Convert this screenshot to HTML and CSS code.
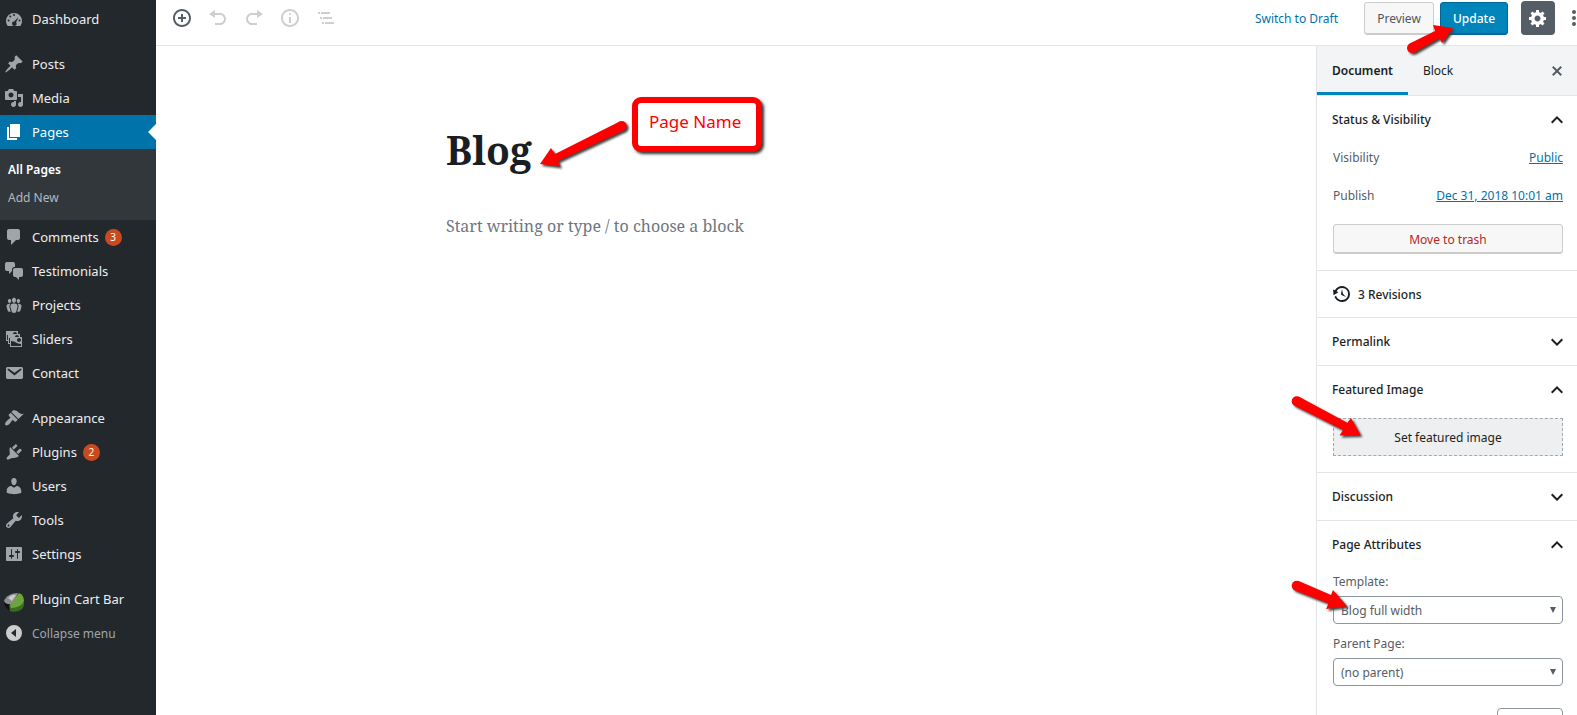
FILE: index.html
```html
<!DOCTYPE html>
<html lang="en">

<head>
    <meta charset="UTF-8">
    <meta name="viewport" content="width=device-width, initial-scale=1">
    <title>Edit Page</title>
    <link rel="stylesheet" href="styles.css">
</head>

<body>
    <nav class="admin-menu">
        <ul class="menu-group">
            <li><a class="menu-item" href="#"><svg class="icon" viewBox="0 0 20 20"><path fill-rule="evenodd" d="M3.8 17h12.4c1.1-1.4 1.8-3.100 1.800-5a8 8 0 0 0-16 0c0 1.900.7 3.600 1.800 5zM10 5a1 1 0 1 1 0 2 1 1 0 0 1 0-2zM6.300 6.500a1 1 0 1 1 0 2 1 1 0 0 1 0-2zM14.500 8l-2.400 5.500a2.200 2.200 0 1 1-2-1zM4.600 10.500a1 1 0 1 1 0 2 1 1 0 0 1 0-2zM15.500 10.500a1 1 0 1 1 0 2 1 1 0 0 1 0-2z"/></svg>Dashboard</a></li>
        </ul>
        <ul class="menu-group">
            <li><a class="menu-item" href="#"><svg class="icon" viewBox="0 0 20 20"><path d="M10.440 3.020l1.820-1.820 6.360 6.350-1.830 1.820c-1.050-.68-2.480-.57-3.410.36l-.75.75c-.92.93-1.040 2.350-.35 3.410l-1.830 1.820-2.410-2.410-2.800 2.790c-.42.42-3.380 2.710-3.800 2.290s1.860-3.390 2.280-3.810l2.790-2.790L4.100 9.360l1.830-1.820c1.050.69 2.480.57 3.400-.36l.75-.75c.93-.92 1.050-2.350.36-3.410z"/></svg>Posts</a></li>
            <li><a class="menu-item" href="#"><svg class="icon" viewBox="0 0 20 20"><path d="M13 11V4c0-.55-.45-1-1-1h-1.670L9 1H5L3.670 3H2c-.55 0-1 .45-1 1v7c0 .55.45 1 1 1h10c.55 0 1-.45 1-1zM7 4.500c1.380 0 2.500 1.120 2.500 2.500S8.380 9.500 7 9.500 4.500 8.380 4.500 7 5.620 4.500 7 4.500zM14 6h5v10.500c0 1.380-1.120 2.500-2.500 2.500S14 17.880 14 16.500s1.120-2.500 2.500-2.500c.17 0 .34.02.5.05V9h-3V6zm-4 8.050V13h2v3.500c0 1.380-1.120 2.500-2.500 2.500S7 17.880 7 16.500 8.120 14 9.500 14c.17 0 .34.02.5.05z"/></svg>Media</a></li>
            <li>
                <a class="menu-item current" href="#"><svg class="icon" viewBox="0 0 20 20"><path d="M6 15V2h10v13H6zm-1 1h8v2H3V5h2v11z"/></svg>Pages</a>
                <ul class="submenu">
                    <li><a class="current" href="#">All Pages</a></li>
                    <li><a href="#">Add New</a></li>
                </ul>
            </li>
            <li><a class="menu-item" href="#"><svg class="icon" viewBox="0 0 20 20"><path d="M5 2h9c1.100 0 2 .9 2 2v7c0 1.100-.9 2-2 2h-2l-5 5v-5H5c-1.100 0-2-.9-2-2V4c0-1.100.9-2 2-2z"/></svg>Comments <span class="count">3</span></a></li>
            <li><a class="menu-item" href="#"><svg class="icon" viewBox="0 0 20 20"><path d="M11 6h-.82C9.070 6 8 7.200 8 8.160V10l-3 3v-3H3c-1.100 0-2-.9-2-2V3c0-1.100.9-2 2-2h6c1.100 0 2 .9 2 2v3zm0 1h6c1.100 0 2 .9 2 2v5c0 1.100-.9 2-2 2h-2v3l-3-3h-1c-1.100 0-2-.9-2-2V9c0-1.100.9-2 2-2z"/></svg>Testimonials</a></li>
            <li><a class="menu-item" href="#"><svg class="icon" viewBox="0 0 20 20"><path d="M8.030 4.460c-.29 1.280.55 3.460 1.970 3.460 1.410 0 2.250-2.180 1.960-3.460-.22-.98-1.080-1.630-1.960-1.630-.89 0-1.740.65-1.970 1.630zm-4.130.9c-.25 1.080.47 2.930 1.670 2.930s1.920-1.850 1.670-2.930c-.19-.83-.92-1.390-1.670-1.390s-1.480.56-1.670 1.390zm8.860 0c-.25 1.080.47 2.930 1.660 2.930 1.200 0 1.920-1.850 1.670-2.930-.19-.83-.92-1.390-1.670-1.390-.74 0-1.470.56-1.660 1.390zm-.59 11.430l1.250-4.300C14.200 10 12.710 8.470 10 8.470c-2.720 0-4.210 1.530-3.440 4.020l1.260 4.300C8.050 17.510 9 18 10 18c.98 0 1.940-.49 2.170-1.210zm-6.100-7.630c-.49.67-.96 1.830-.42 3.590l1.120 3.790c-.34.2-.77.31-1.200.31-.85 0-1.650-.41-1.850-1.030l-1.070-3.650c-.65-2.110.61-3.400 2.920-3.400.27 0 .54.02.79.06-.1.1-.2.22-.29.33zm8.350-.39c2.310 0 3.580 1.290 2.920 3.400l-1.070 3.650c-.2.62-1 1.030-1.850 1.030-.43 0-.86-.11-1.200-.31l1.110-3.770c.55-1.780.08-2.940-.42-3.610-.08-.11-.18-.23-.28-.33.25-.04.51-.06.79-.06z"/></svg>Projects</a></li>
            <li><a class="menu-item" href="#"><svg class="icon" viewBox="0 0 20 20"><path d="M4 15v-3H2V2h12v3h2v3h2v10H6v-3H4zm7-12c-1.100 0-2 .9-2 2h4c0-1.100-.89-2-2-2zm-7 8V6H3v5h1zm7-3h4c0-1.100-.89-2-2-2-1.100 0-2 .9-2 2zm-5 6V9H5v5h1zm9-1c1.100 0 2-.89 2-2 0-1.100-.9-2-2-2s-2 .9-2 2c0 1.110.9 2 2 2zm2 4v-2c-5 0-5-3-10-3v5h10z"/></svg>Sliders</a></li>
            <li><a class="menu-item" href="#"><svg class="icon" viewBox="0 0 20 20"><path d="M3.870 4h13.250C18.370 4 19 4.590 19 5.790v8.420c0 1.190-.63 1.790-1.880 1.790H3.870c-1.250 0-1.880-.6-1.880-1.790V5.790c0-1.200.63-1.790 1.880-1.790zm6.620 8.600l6.740-5.530c.24-.2.43-.66.13-1.070-.29-.41-.82-.42-1.170-.17l-5.700 3.860L4.800 5.830c-.35-.25-.88-.24-1.170.17-.3.41-.11.87.13 1.070z"/></svg>Contact</a></li>
        </ul>
        <ul class="menu-group">
            <li><a class="menu-item" href="#"><svg class="icon" viewBox="0 0 20 20"><path d="M14.480 11.060L7.410 3.990l1.500-1.500c.5-.56 2.300-.47 3.510.32 1.210.8 1.430 1.280 2.910 2.100 1.180.64 2.450 1.260 4.450.85zm-.71.71L6.700 4.700 4.930 6.470c-.39.39-.39 1.020 0 1.410l1.060 1.060c.39.39.39 1.030 0 1.420-.6.6-1.430 1.110-2.210 1.690-.35.26-.7.53-1.010.84C1.430 14.230.4 16.080 1.400 17.070c.99 1 2.840-.03 4.180-1.360.31-.31.58-.66.85-1.020.57-.78 1.080-1.610 1.690-2.210.39-.39 1.020-.39 1.410 0l1.060 1.060c.39.39 1.020.39 1.410 0z"/></svg>Appearance</a></li>
            <li><a class="menu-item" href="#"><svg class="icon" viewBox="0 0 20 20"><path d="M13.110 4.360L9.870 7.600 8 5.730l3.240-3.240c.35-.34 1.050-.2 1.560.32.52.51.66 1.210.31 1.550zm-7.100.65l9.010 9.010-1.190.84c-.71.71-2.630 1.160-3.820 1.160H8.140L4.900 17.260c-.49.49-1.430.49-1.920 0-.49-.49-.49-1.430 0-1.920l2.780-2.780v-2.100c0-1.200-.65-3.620.05-4.330zm6.360 5.090l3.240-3.240c.34-.35 1.040-.21 1.550.31.52.51.66 1.210.31 1.550l-3.240 3.250z"/></svg>Plugins <span class="count">2</span></a></li>
            <li><a class="menu-item" href="#"><svg class="icon" viewBox="0 0 20 20"><path d="M10 9.250c-2.270 0-2.730-3.440-2.730-3.440C7 4.020 7.820 2 9.970 2c2.160 0 2.980 2.020 2.710 3.810 0 0-.41 3.440-2.680 3.440zm0 2.570L12.720 10c2.390 0 4.520 2.330 4.520 4.530v2.490s-3.650 1.130-7.240 1.130c-3.650 0-7.240-1.130-7.240-1.130v-2.490c0-2.250 1.940-4.480 4.470-4.480z"/></svg>Users</a></li>
            <li><a class="menu-item" href="#"><svg class="icon" viewBox="0 0 20 20"><path d="M16.680 9.770c-1.340 1.340-3.300 1.670-4.950.99l-5.410 6.520c-.99.99-2.590.99-3.580 0s-.99-2.590 0-3.570l6.520-5.420c-.68-1.650-.35-3.610.99-4.950 1.280-1.280 3.120-1.620 4.720-1.060l-2.890 2.890 2.820 2.820 2.860-2.870c.53 1.580.18 3.390-1.080 4.650zM3.810 16.210c.4.39 1.040.39 1.430 0 .4-.4.4-1.040 0-1.430-.39-.4-1.030-.4-1.430 0-.39.39-.39 1.030 0 1.430z"/></svg>Tools</a></li>
            <li><a class="menu-item" href="#"><svg class="icon" viewBox="0 0 20 20"><path d="M18 16V4c0-.55-.45-1-1-1H3c-.55 0-1 .45-1 1v12c0 .55.45 1 1 1h14c.55 0 1-.45 1-1zM8 11h1c.55 0 1 .45 1 1s-.45 1-1 1H8v1.500c0 .28-.22.5-.5.5s-.5-.22-.5-.5V13H6c-.55 0-1-.45-1-1s.45-1 1-1h1V5.500c0-.28.22-.5.5-.5s.5.22.5.5V11zm5-2h-1c-.55 0-1-.45-1-1s.45-1 1-1h1V5.500c0-.28.22-.5.5-.5s.5.22.5.5V7h1c.55 0 1 .45 1 1s-.45 1-1 1h-1v5.500c0 .28-.22.5-.5.5s-.5-.22-.5-.5V9z"/></svg>Settings</a></li>
        </ul>
        <ul class="menu-group">
            <li>
                <a class="menu-item" href="#">
                    <svg class="icon logo" viewBox="0 0 20 20">
                        <path fill="#8c8f91" d="M0 9C2 4 7 1 14 1L9 13Q2 14 0 9z"/>
                        <path fill="#c9cbcc" d="M4 6Q8 2 12 3L8 9z"/>
                        <path fill="#111" d="M0 10q4 3 6 2l2 7Q1 18 0 10z"/>
                        <path fill="#3d6b22" d="M5 13q8 5 15-4 1 6-3 9-6 3-11 1z"/>
                        <path fill="#6da53c" d="M15 1q5 2 5 8-3 7-13 7l-1-3z"/>
                    </svg>Plugin Cart Bar</a>
            </li>
            <li><button class="menu-item collapse" type="button"><svg class="icon" viewBox="0 0 20 20"><path fill-rule="evenodd" d="M10 2a8 8 0 1 1 0 16 8 8 0 0 1 0-16zM12 6v8l-5-4z"/></svg>Collapse menu</button></li>
        </ul>
    </nav>

    <div class="editor">
        <header class="editor-header">
            <div class="toolbar">
                <button class="tool" type="button" aria-label="Add block"><svg class="icon" viewBox="0 0 20 20"><path d="M10 1c-5 0-9 4-9 9s4 9 9 9 9-4 9-9-4-9-9-9zm0 16c-3.900 0-7-3.100-7-7s3.100-7 7-7 7 3.100 7 7-3.100 7-7 7zm1-11H9v3H6v2h3v3h2v-3h3V9h-3V6z"/></svg></button>
                <button class="tool" type="button" aria-label="Undo" disabled><svg class="icon" viewBox="0 0 20 20"><path d="M12 5H7V2L1 6l6 4V7h5c2.200 0 4 1.800 4 4s-1.800 4-4 4H7v2h5c3.300 0 6-2.700 6-6s-2.700-6-6-6z"/></svg></button>
                <button class="tool" type="button" aria-label="Redo" disabled><svg class="icon" viewBox="0 0 20 20"><path d="M8 5h5V2l6 4-6 4V7H8c-2.200 0-4 1.800-4 4s1.800 4 4 4h5v2H8c-3.300 0-6-2.700-6-6s2.700-6 6-6z"/></svg></button>
                <button class="tool" type="button" aria-label="Content structure" disabled><svg class="icon" viewBox="0 0 20 20"><path d="M9 15h2V9H9v6zm1-10c-.5 0-1 .5-1 1s.5 1 1 1 1-.5 1-1-.5-1-1-1zm0-4c-5 0-9 4-9 9s4 9 9 9 9-4 9-9-4-9-9-9zm0 16c-3.900 0-7-3.100-7-7s3.100-7 7-7 7 3.100 7 7-3.100 7-7 7z"/></svg></button>
                <button class="tool" type="button" aria-label="Block navigation" disabled><svg class="icon" viewBox="0 0 20 20"><path d="M2 4h2v2H2zM5 4h9v2H5zM4 9h2v2H4zM7 9h9v2H7zM6 14h2v2H6zM9 14h9v2H9z"/></svg></button>
            </div>
            <div class="actions">
                <button class="link-button" type="button">Switch to Draft</button>
                <button class="button preview" type="button">Preview</button>
                <div class="marked">
                    <button class="button primary" type="button">Update</button>
                    <svg class="arrow arrow-update" viewBox="0 0 60 48" width="60" height="48"><circle cx="12" cy="33" r="5"/><path d="M9.600 28.500L35 16l-2-6 20 3-11 15-2.500-5L14.200 37.500z"/></svg>
                </div>
                <button class="settings" type="button" aria-label="Settings"><svg class="icon" viewBox="0 0 20 20"><path d="M18 12h-2.180c-.17.7-.44 1.350-.81 1.930l1.540 1.540-2.100 2.100-1.540-1.540c-.58.36-1.230.63-1.910.79V19H8v-2.180c-.68-.16-1.330-.43-1.910-.79l-1.540 1.540-2.120-2.120 1.540-1.540c-.36-.58-.63-1.230-.79-1.910H1V9.030h2.170c.16-.7.44-1.350.8-1.940L2.430 5.550l2.100-2.100 1.540 1.540c.58-.37 1.240-.64 1.930-.81V2h3v2.180c.68.16 1.330.43 1.910.79l1.540-1.540 2.120 2.120-1.540 1.540c.36.59.64 1.240.8 1.940H18V12zm-8.500 1.500c1.660 0 3-1.340 3-3s-1.340-3-3-3-3 1.340-3 3 1.340 3 3 3z"/></svg></button>
                <button class="more" type="button" aria-label="More"><svg viewBox="0 0 6 20" width="6" height="20"><circle cx="3" cy="4" r="2"/><circle cx="3" cy="10" r="2"/><circle cx="3" cy="16" r="2"/></svg></button>
            </div>
        </header>

        <div class="editor-body">
            <main class="canvas">
                <div class="post">
                    <input class="post-title" type="text" aria-label="Title" value="Blog">
                    <input class="post-text" type="text" aria-label="Content" placeholder="Start writing or type / to choose a block">
                    <svg class="arrow arrow-title" viewBox="0 0 96 60" width="96" height="60"><circle cx="85.700" cy="10" r="5"/><path d="M83.600 5.500L19 38l-4-6L4 48l20 2.500-2-5.500 65.800-30.500z"/></svg>
                    <div class="callout">Page Name</div>
                </div>
            </main>

            <aside class="panel">
                <div class="tabs">
                    <button class="tab active" type="button">Document</button>
                    <button class="tab" type="button">Block</button>
                    <button class="close" type="button" aria-label="Close settings"><svg class="icon" viewBox="0 0 20 20"><path d="M14.950 6.460L11.410 10l3.540 3.540-1.410 1.410L10 11.420l-3.530 3.530-1.420-1.420L8.580 10 5.050 6.470l1.420-1.420L10 8.580l3.540-3.530z"/></svg></button>
                </div>

                <section class="section">
                    <button class="section-title" type="button">Status &amp; Visibility<svg class="chevron" viewBox="0 0 24 24"><path d="M12 8l-6 6 1.410 1.410L12 10.830l4.590 4.580L18 14z"/></svg></button>
                    <div class="section-body">
                        <div class="row"><span>Visibility</span><a href="#">Public</a></div>
                        <div class="row"><span>Publish</span><a href="#">Dec 31, 2018 10:01 am</a></div>
                        <button class="button trash" type="button">Move to trash</button>
                    </div>
                </section>

                <section class="section">
                    <button class="section-title revisions" type="button"><svg class="icon" viewBox="0 0 20 20"><path d="M13.650 2.880c3.930 2.010 5.480 6.840 3.470 10.770s-6.830 5.480-10.770 3.470c-1.870-.96-3.200-2.560-3.860-4.400l1.640-1.030c.45 1.570 1.520 2.950 3.080 3.760 3.010 1.540 6.690.35 8.230-2.660 1.550-3.010.36-6.690-2.650-8.240C9.780 3.010 6.100 4.200 4.560 7.210l1.880.97-4.950 3.080-.39-5.820 1.780.91C4.900 2.400 9.750.89 13.650 2.880zm-4.360 7.830C9.110 10.530 9 10.280 9 10c0-.07.03-.12.04-.19h-.01L10 5l.97 4.810L14 13l-4.500-2.120.02-.02c-.08-.04-.16-.09-.23-.15z"/></svg>3 Revisions</button>
                </section>

                <section class="section">
                    <button class="section-title" type="button">Permalink<svg class="chevron" viewBox="0 0 24 24"><path d="M7.410 8.590L12 13.170l4.590-4.580L18 10l-6 6-6-6z"/></svg></button>
                </section>

                <section class="section">
                    <button class="section-title" type="button">Featured Image<svg class="chevron" viewBox="0 0 24 24"><path d="M12 8l-6 6 1.410 1.410L12 10.830l4.590 4.580L18 14z"/></svg></button>
                    <div class="section-body">
                        <button class="featured" type="button">Set featured image</button>
                    </div>
                    <svg class="arrow arrow-featured" viewBox="0 0 90 60" width="90" height="60"><circle cx="12.700" cy="11.300" r="5"/><path d="M15 6.800l48.300 26L67 28l9.500 17-21 .5 3.500-5.500-48.600-24.200z"/></svg>
                </section>

                <section class="section">
                    <button class="section-title" type="button">Discussion<svg class="chevron" viewBox="0 0 24 24"><path d="M7.410 8.590L12 13.170l4.590-4.580L18 10l-6 6-6-6z"/></svg></button>
                </section>

                <section class="section">
                    <button class="section-title" type="button">Page Attributes<svg class="chevron" viewBox="0 0 24 24"><path d="M12 8l-6 6 1.410 1.410L12 10.830l4.590 4.580L18 14z"/></svg></button>
                    <div class="section-body attributes">
                        <label for="template">Template:</label>
                        <div class="select">
                            <select id="template">
                                <option>Blog full width</option>
                            </select>
                        </div>
                        <label for="parent">Parent Page:</label>
                        <div class="select">
                            <select id="parent">
                                <option>(no parent)</option>
                            </select>
                        </div>
                        <input class="order" type="text" aria-label="Order">
                    </div>
                    <svg class="arrow arrow-template" viewBox="0 0 76 50" width="76" height="50"><circle cx="12.700" cy="10.700" r="5"/><path d="M14.600 6L47 20l2-5 14 16.300-21 2.700 2.500-5.500-33.700-13.100z"/></svg>
                </section>
            </aside>
        </div>
    </div>
</body>

</html>
```

FILE: styles.css
```css
* {
    box-sizing: border-box;
}

body {
    display: flex;
    height: 100vh;
    margin: 0;
    overflow: hidden;
    background: #fff;
    color: #555d66;
    font-family: "Segoe UI", "Noto Sans", sans-serif;
    font-size: 12px;
}

ul {
    margin: 0;
    padding: 0;
    list-style: none;
}

button,
input,
select {
    margin: 0;
    padding: 0;
    border: 0;
    background: none;
    color: inherit;
    font: inherit;
}

.icon {
    display: block;
    flex: none;
    width: 20px;
    height: 20px;
    fill: currentColor;
}

/* Left admin menu */
.admin-menu {
    flex: none;
    width: 156px;
    padding-top: 2px;
    background: #23282d;
}

.menu-group {
    margin-bottom: 11px;
}

.menu-item {
    display: flex;
    align-items: center;
    width: 100%;
    height: 34px;
    padding-left: 4px;
    color: #eee;
    font-size: 13px;
    text-decoration: none;
    white-space: nowrap;
}

.menu-item .icon {
    margin-right: 8px;
    color: #a0a5aa;
}

.menu-item .logo {
    margin-top: 6px;
}

.menu-item.current {
    position: relative;
    background: #0073aa;
    color: #fff;
}

.menu-item.current .icon {
    color: #fff;
}

/* notch pointing at the content */
.menu-item.current::after {
    content: "";
    position: absolute;
    top: 9px;
    right: 0;
    border: 8px solid transparent;
    border-left-width: 0;
    border-right-color: #fff;
}

.menu-item.collapse {
    color: #a0a5aa;
    font-size: 12px;
}

.menu-item.collapse .icon {
    color: #ccc;
}

.submenu {
    padding: 7px 0 8px;
    background: #32373c;
}

.submenu a {
    display: block;
    padding-left: 8px;
    color: #b4b9be;
    line-height: 28px;
    text-decoration: none;
}

.submenu .current {
    color: #fff;
    font-weight: 600;
}

.count {
    width: 17px;
    margin-left: 6px;
    border-radius: 50%;
    background: #ca4a1f;
    color: #fff;
    font-size: 10px;
    line-height: 17px;
    text-align: center;
}

/* Top bar */
.editor {
    display: flex;
    flex: 1;
    flex-direction: column;
    min-width: 0;
}

.editor-header {
    display: flex;
    flex: none;
    align-items: flex-start;
    justify-content: space-between;
    height: 46px;
    border-bottom: 1px solid #e2e4e7;
}

.toolbar {
    display: flex;
    padding-left: 8px;
}

.tool {
    display: flex;
    align-items: center;
    justify-content: center;
    width: 36px;
    height: 36px;
}

.tool:disabled {
    color: #ccced1;
}

.actions {
    display: flex;
    align-items: center;
    height: 36px;
}

.link-button {
    margin-right: 26px;
    color: #0073aa;
}

.button {
    height: 33px;
    border: 1px solid #ccc;
    border-radius: 3px;
    background: #f7f7f7;
    box-shadow: inset 0 -1px 0 #ccc;
    color: #555;
}

.preview {
    width: 70px;
    margin-right: 6px;
}

.marked {
    position: relative;
}

.primary {
    width: 68px;
    border-color: #006799;
    background: #0085ba;
    box-shadow: inset 0 -1px 0 #006799;
    color: #fff;
    font-weight: 500;
}

.settings {
    display: flex;
    align-items: center;
    justify-content: center;
    width: 34px;
    height: 34px;
    margin: 0 16px 0 13px;
    border-radius: 4px;
    background: #555d66;
    color: #fff;
}

.more svg {
    display: block;
    fill: #555d66;
}

/* Writing area */
.editor-body {
    display: flex;
    flex: 1;
    min-height: 0;
}

.canvas {
    flex: 1;
    padding-top: 70px;
}

.post {
    position: relative;
    display: flex;
    flex-direction: column;
    max-width: 580px;
    margin: 0 auto;
    font-family: "Noto Serif", "Liberation Serif", serif;
}

.post-title {
    height: 66px;
    color: #191e23;
    font-size: 39px;
    font-weight: 700;
}

.post-text {
    height: 28px;
    margin-top: 30px;
    font-size: 16px;
}

.post-text::placeholder {
    color: #6c7781;
    opacity: 1;
}

.callout {
    position: absolute;
    top: -19px;
    left: 186px;
    width: 130px;
    height: 55px;
    padding: 0 11px;
    border: 6px solid #f00;
    border-radius: 9px;
    background: #fff;
    box-shadow: 2px 2px 3px #333;
    color: #f00;
    font-family: "Segoe UI", "Noto Sans", sans-serif;
    font-size: 17px;
    line-height: 38px;
    white-space: nowrap;
}

.arrow {
    position: absolute;
    z-index: 1;
    fill: #f00;
    filter: drop-shadow(2px 2px 1px #444);
    pointer-events: none;
}

.arrow-title {
    top: 0;
    left: 90px;
}

.arrow-update {
    top: 13px;
    left: -40px;
}

.arrow-featured {
    top: 24px;
    left: -33px;
}

.arrow-template {
    top: 54px;
    left: -33px;
}

/* Settings panel */
.panel {
    flex: none;
    width: 261px;
    border-left: 1px solid #e2e4e7;
}

.tabs {
    display: flex;
    height: 50px;
    border-bottom: 1px solid #e2e4e7;
    background: #f3f4f5;
    color: #191e23;
}

.tab {
    padding: 0 15px;
    border-bottom: 3px solid transparent;
    border-top: 3px solid transparent;
}

.tab.active {
    border-bottom-color: #0085ba;
    font-weight: 600;
}

.close {
    margin: 0 10px 0 auto;
    color: #555d66;
}

.section {
    position: relative;
    border-bottom: 1px solid #e2e4e7;
}

.section-title {
    display: flex;
    align-items: center;
    justify-content: space-between;
    width: 100%;
    height: 47px;
    padding: 0 8px 0 15px;
    color: #191e23;
    font-weight: 500;
}

.section-title.revisions {
    justify-content: flex-start;
    height: 46px;
    gap: 6px;
}

.chevron {
    width: 24px;
    height: 24px;
    fill: #191e23;
}

.section-body {
    padding: 0 14px 16px 16px;
}

.row {
    display: flex;
    align-items: center;
    justify-content: space-between;
    height: 28px;
    margin-bottom: 10px;
}

.row a {
    color: #0073aa;
}

.trash {
    width: 100%;
    height: 30px;
    margin-top: 5px;
    color: #b52727;
}

.featured {
    width: 100%;
    height: 38px;
    margin-top: 5px;
    border: 1px dashed #a2aab2;
    background: #edeff0;
    color: #191e23;
}

.attributes {
    display: flex;
    flex-direction: column;
    padding-top: 4px;
}

.attributes label {
    line-height: 20px;
}

.select {
    position: relative;
    margin: 4px 0 10px;
}

.select::after {
    content: "";
    position: absolute;
    top: 11px;
    right: 7px;
    border: 3px solid transparent;
    border-top: 6px solid #555d66;
    border-bottom: 0;
}

.select select {
    display: block;
    width: 100%;
    height: 28px;
    padding: 1px 7px 0;
    border: 1px solid #8d96a0;
    border-radius: 4px;
    background: #fff;
    appearance: none;
}

.order {
    align-self: flex-end;
    width: 66px;
    height: 28px;
    margin-top: 12px;
    border: 1px solid #8d96a0;
    border-radius: 4px;
}
```
